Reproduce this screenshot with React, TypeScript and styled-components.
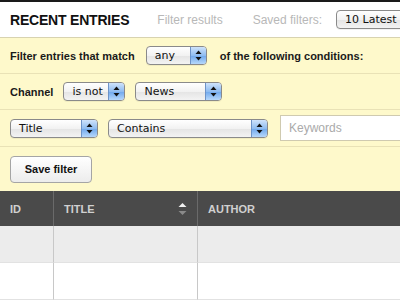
import React from "react";
import styled, { createGlobalStyle } from "styled-components";

const Global = createGlobalStyle`
  html, body { margin: 0; padding: 0; background: #fff; }
  body { width: 400px; height: 300px; overflow: hidden; font-family: "Liberation Sans", Arial, sans-serif; }
`;

const Page = styled.div`
  width: 400px;
  height: 300px;
  border-top: 2px solid #1a1a1a;
  box-sizing: border-box;
  overflow: hidden;
`;

const Header = styled.div`
  height: 35px;
  display: flex;
  align-items: center;
  padding-left: 10px;
  border-bottom: 1px solid #d8d3b0;
  white-space: nowrap;
`;

const Title = styled.div`
  font-weight: bold;
  font-size: 14px;
  color: #111;
  letter-spacing: -0.2px;
`;

const Muted = styled.div<{ $ml: number }>`
  margin-left: ${(p) => p.$ml}px;
  font-size: 12px;
  color: #b8b8b8;
`;

const Filters = styled.div`
  background: #fef9cb;
`;

const Row = styled.div<{ $h: number; $line?: boolean }>`
  height: ${(p) => p.$h}px;
  display: flex;
  align-items: center;
  padding-left: 10px;
  border-bottom: ${(p) => (p.$line ? "1px solid #e9e2b6" : "none")};
  white-space: nowrap;
  box-sizing: border-box;
`;

const Label = styled.span<{ $ml?: number; $mr?: number }>`
  font-size: 11px;
  font-weight: bold;
  color: #1a1a1a;
  margin-left: ${(p) => p.$ml ?? 0}px;
  margin-right: ${(p) => p.$mr ?? 0}px;
`;

const SelectBox = styled.div<{ $w: number; $ml?: number }>`
  width: ${(p) => p.$w}px;
  height: 19px;
  margin-left: ${(p) => p.$ml ?? 0}px;
  box-sizing: border-box;
  border: 1px solid #8a8a8a;
  border-radius: 4px;
  background: linear-gradient(#ffffff, #f2f2f2 50%, #e4e4e4 51%, #f3f3f3);
  display: flex;
  align-items: center;
  overflow: hidden;
  flex-shrink: 0;
  box-shadow: 0 1px 0 rgba(0,0,0,0.05);
`;

const SelectText = styled.span`
  flex: 1;
  padding-left: 8px;
  font-family: "DejaVu Sans", "Liberation Sans", sans-serif;
  font-size: 11px;
  color: #111;
  overflow: hidden;
`;

const Arrows = styled.span`
  width: 15px;
  height: 100%;
  border-left: 1px solid #6d93c8;
  background: linear-gradient(#cfe3fb, #8fbcf0 50%, #6ea7ec 51%, #b7d8fb);
  display: flex;
  align-items: center;
  justify-content: center;
`;

const Keywords = styled.div`
  margin-left: 12px;
  width: 140px;
  height: 26px;
  box-sizing: border-box;
  border: 1px solid #cfcab0;
  background: #fff;
  display: flex;
  align-items: center;
  padding-left: 8px;
  font-size: 12px;
  color: #aaa;
  flex-shrink: 0;
`;

const Button = styled.div`
  width: 82px;
  height: 27px;
  box-sizing: border-box;
  border: 1px solid #a5a5a5;
  border-radius: 4px;
  background: linear-gradient(#ffffff, #ececec);
  display: flex;
  align-items: center;
  justify-content: center;
  font-size: 11px;
  font-weight: bold;
  color: #111;
`;

const Table = styled.div`
  display: grid;
  grid-template-columns: 54px 144px 1fr;
`;

const HeadCell = styled.div<{ $last?: boolean }>`
  height: 35px;
  background: #4a4a4a;
  border-right: ${(p) => (p.$last ? "none" : "1px solid #6a6a6a")};
  display: flex;
  align-items: center;
  padding-left: 10px;
  padding-right: 10px;
  font-size: 11px;
  font-weight: bold;
  color: #d0d0d0;
`;

const HeadText = styled.span`
  flex: 1;
`;

const Cell = styled.div<{ $alt: boolean; $last?: boolean }>`
  height: 36px;
  background: ${(p) => (p.$alt ? "#ececec" : "#ffffff")};
  border-right: ${(p) => (p.$last ? "none" : "1px solid #c8c8c8")};
  border-bottom: 1px solid #e2e2e2;
`;

const Select = ({ w, ml, text }: { w: number; ml?: number; text: string }) => (
  <SelectBox $w={w} $ml={ml}>
    <SelectText>{text}</SelectText>
    <Arrows>
      <svg width="7" height="11" viewBox="0 0 7 11">
        <path d="M3.5 0.5 L6.5 4 L0.5 4 Z" fill="#111" />
        <path d="M3.5 10.5 L6.5 7 L0.5 7 Z" fill="#111" />
      </svg>
    </Arrows>
  </SelectBox>
);

const SortIcon = () => (
  <svg width="9" height="14" viewBox="0 0 9 14">
    <path d="M4.5 1 L8.5 5 L0.5 5 Z" fill="#f0f0f0" />
    <path d="M4.5 13 L8.5 9 L0.5 9 Z" fill="#8a8a8a" />
  </svg>
);

export default function App() {
  const rows = [true, false];
  return (
    <Page>
      <Global />
      <Header>
        <Title>RECENT ENTRIES</Title>
        <Muted $ml={28}>Filter results</Muted>
        <Muted $ml={30}>Saved filters:</Muted>
        <SelectBox $w={90} $ml={14}>
          <SelectText>10 Latest news</SelectText>
        </SelectBox>
      </Header>
      <Filters>
        <Row $h={36} $line>
          <Label $mr={11}>Filter entries that match</Label>
          <Select w={61} text="any" />
          <Label $ml={13}>of the following conditions:</Label>
        </Row>
        <Row $h={36} $line>
          <Label $mr={10}>Channel</Label>
          <Select w={62} text="is not" />
          <Select w={87} ml={10} text="News" />
        </Row>
        <Row $h={37} $line>
          <Select w={88} text="Title" />
          <Select w={160} ml={10} text="Contains" />
          <Keywords>Keywords</Keywords>
        </Row>
        <Row $h={44}>
          <Button>Save filter</Button>
        </Row>
      </Filters>
      <Table>
        <HeadCell><HeadText>ID</HeadText></HeadCell>
        <HeadCell><HeadText>TITLE</HeadText><SortIcon /></HeadCell>
        <HeadCell $last><HeadText>AUTHOR</HeadText></HeadCell>
        {rows.map((alt, i) => (
          <React.Fragment key={i}>
            <Cell $alt={alt} />
            <Cell $alt={alt} />
            <Cell $alt={alt} $last />
          </React.Fragment>
        ))}
      </Table>
    </Page>
  );
}
